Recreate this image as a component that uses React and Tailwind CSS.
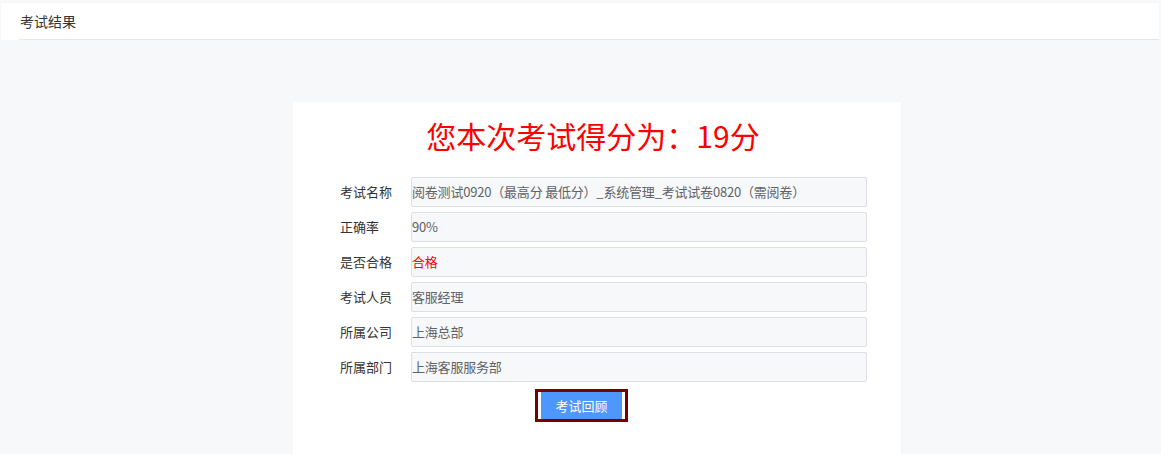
export default function App() {
  const rows = [
    ["考试名称", "阅卷测试0920（最高分 最低分）_系统管理_考试试卷0820（需阅卷）", false],
    ["正确率", "90%", false],
    ["是否合格", "合格", true],
    ["考试人员", "客服经理", false],
    ["所属公司", "上海总部", false],
    ["所属部门", "上海客服服务部", false],
  ];
  const font = { fontFamily: '"Noto Sans CJK SC", "Noto Sans", sans-serif' };
  return (
    <div className="min-h-[454px] bg-[#f7f8fa] pt-[3px]" style={font}>
      <div className="ml-px mr-[2px] bg-white pl-[18px]">
        <div className="h-[37px] border-b border-[#e4e7ed] flex items-center text-[14px] text-[#333] pl-px">
          考试结果
        </div>
      </div>
      <div className="ml-[293px] mt-[62px] w-[608px] bg-white pb-[40px] pl-[47px] pr-[34px]">
        <div className="h-[75px] flex items-center justify-center text-[30px] text-[#ff0000] pb-[9px] pr-[21px]">
          您本次考试得分为：19分
        </div>
        <div className="flex flex-col gap-[5px]">
          {rows.map(([label, value, red]) => (
            <div key={label} className="flex items-center">
              <div className="w-[71px] text-[13px] text-[#333]">{label}</div>
              <div
                className={
                  "flex-1 h-[30px] flex items-center border border-[#dcdfe6] rounded-[2px] bg-[#f7f8fa] text-[13px] tracking-[-0.2px] " +
                  (red ? "text-[#ff0000]" : "text-[#606266]")
                }
              >
                {value}
              </div>
            </div>
          ))}
        </div>
        <div className="flex justify-center mt-[7px] pr-[44px]">
          <div className="border-[3px] border-[#7a0000]">
            <button className="h-[27px] w-[87px] bg-[#4e97fd] border-x-[3px] border-white text-white text-[13px] flex items-center justify-center">
              考试回顾
            </button>
          </div>
        </div>
      </div>
    </div>
  );
}
